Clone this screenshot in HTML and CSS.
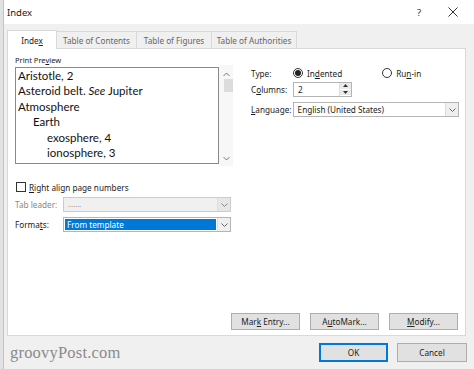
FILE: index.html
```html
<!DOCTYPE html>
<html>
<head>
<meta charset="utf-8">
<link rel="stylesheet" href="styles.css">
</head>
<body>
<div class="dialog">
  <div class="titlebar">
    <span class="title">Index</span>
    <span class="help">?</span>
    <svg class="close" width="10" height="10" viewBox="0 0 10 10"><path d="M0.5 0.5 L9.5 9.5 M9.5 0.5 L0.5 9.5" stroke="#333" stroke-width="1" fill="none"/></svg>
  </div>
  <div class="body">
    <div class="tabs">
      <div class="tab active"><span>Inde<u>x</u></span></div>
      <div class="tab"><span>Table of Contents</span></div>
      <div class="tab"><span>Table of Figures</span></div>
      <div class="tab"><span>Table of Authorities</span></div>
    </div>
    <div class="panel">
      <div class="top">
        <div class="left">
          <div class="pp-label">Print Pre<u>v</u>iew</div>
          <div class="preview-wrap">
            <div class="preview">
              <div class="ln">Aristotle, 2</div>
              <div class="ln">Asteroid belt. <i>See</i> Jupiter</div>
              <div class="ln">Atmosphere</div>
              <div class="ln l1">Earth</div>
              <div class="ln l2">exosphere, 4</div>
              <div class="ln l2">ionosphere, 3</div>
            </div>
            <div class="vscroll">
              <svg width="7" height="5" viewBox="0 0 7 5"><path d="M0.5 4 L3.5 1 L6.5 4" stroke="#777" fill="none"/></svg>
              <div class="thumb"></div>
              <div class="track"></div>
              <svg width="7" height="5" viewBox="0 0 7 5"><path d="M0.5 1 L3.5 4 L6.5 1" stroke="#777" fill="none"/></svg>
            </div>
          </div>
        </div>
        <div class="right">
          <div class="row type-row">
            <span class="lbl">Type:</span>
            <span class="radio checked"></span><span class="rtext">In<u>d</u>ented</span>
            <span class="radio runin"></span><span class="rtext">Ru<u>n</u>-in</span>
          </div>
          <div class="row cols-row">
            <span class="lbl">C<u>o</u>lumns:</span>
            <div class="spin">
              <span class="spin-val">2</span>
              <div class="spin-btns">
                <div class="sb"><svg width="5" height="3" viewBox="0 0 5 3"><path d="M0 3 L2.5 0 L5 3Z" fill="#333"/></svg></div>
                <div class="sb"><svg width="5" height="3" viewBox="0 0 5 3"><path d="M0 0 L2.5 3 L5 0Z" fill="#333"/></svg></div>
              </div>
            </div>
          </div>
          <div class="row lang-row">
            <span class="lbl"><u>L</u>anguage:</span>
            <div class="combo lang">
              <span class="cval">English (United States)</span>
              <span class="carrow"><svg width="7" height="4" viewBox="0 0 7 4"><path d="M0.5 0.5 L3.5 3.5 L6.5 0.5" stroke="#666" fill="none"/></svg></span>
            </div>
          </div>
        </div>
      </div>
      <div class="options">
        <div class="chk-row"><span class="checkbox"></span><span><u>R</u>ight align page numbers</span></div>
        <div class="row opt-row">
          <span class="lbl2 disabled">Tab leader:</span>
          <div class="combo small dis">
            <span class="cval dots">.......</span>
            <span class="carrow"><svg width="7" height="4" viewBox="0 0 7 4"><path d="M0.5 0.5 L3.5 3.5 L6.5 0.5" stroke="#888" fill="none"/></svg></span>
          </div>
        </div>
        <div class="row opt-row">
          <span class="lbl2">Forma<u>t</u>s:</span>
          <div class="combo small">
            <span class="cval sel">From template</span>
            <span class="carrow"><svg width="7" height="4" viewBox="0 0 7 4"><path d="M0.5 0.5 L3.5 3.5 L6.5 0.5" stroke="#666" fill="none"/></svg></span>
          </div>
        </div>
      </div>
      <div class="buttons">
        <div class="btn"><span>Mar<u>k</u> Entry...</span></div>
        <div class="btn"><span>A<u>u</u>toMark...</span></div>
        <div class="btn"><span><u>M</u>odify...</span></div>
      </div>
    </div>
    <div class="footer">
      <span class="watermark">groovyPost.com</span>
      <div class="btn ok"><span>OK</span></div>
      <div class="btn cancel"><span>Cancel</span></div>
    </div>
  </div>
</div>
</body>
</html>
```

FILE: styles.css
```css
* { box-sizing: border-box; }
html, body { margin: 0; padding: 0; }
body {
  background: #e2e2e2;
  font-family: "Noto Sans", "Open Sans", sans-serif;
  font-size: 8.2px;
  color: #1a1a1a;
  width: 474px;
  height: 369px;
  overflow: hidden;
}
u { text-decoration: underline; text-underline-offset: 1px; }
.dialog {
  margin-left: 3px;
  border-left: 1px solid #c4c4c4;
  height: 369px;
  background: #f0f0f0;
  display: flex;
  flex-direction: column;
}
.titlebar {
  height: 24px;
  background: #fff;
  display: flex;
  align-items: center;
  padding-left: 3px;
}
.title { font-size: 9.5px; flex: 1; }
.help { font-size: 9.5px; margin-right: 27px; color: #333; }
.close { margin-right: 16px; }
.body { flex: 1; padding: 5px 0 0 3px; display: flex; flex-direction: column; }
.tabs { display: flex; align-items: flex-end; height: 19px; }
.tab {
  height: 17px;
  border: 1px solid #d9d9d9;
  border-bottom: none;
  border-left: none;
  background: #f0f0f0;
  color: #666;
  display: flex;
  align-items: center;
  justify-content: center;
  white-space: nowrap;
  padding: 0;
}
.tab.active {
  height: 19px;
  background: #fff;
  color: #222;
  border-left: 1px solid #d9d9d9;
  width: 50px;
  margin-bottom: -1px;
  position: relative;
  z-index: 1;
}
.tab:nth-child(2) { width: 80px; }
.tab:nth-child(3) { width: 75px; }
.tab:nth-child(4) { width: 85px; }
.panel {
  width: 459px;
  height: 288px;
  background: #fff;
  border: 1px solid #d9d9d9;
  padding: 6px 7px 0 7px;
  display: flex;
  flex-direction: column;
}
.top { display: flex; }
.left { width: 218px; }
.pp-label { font-size: 7.5px; height: 12px; line-height: 10px; }
.preview-wrap { display: flex; }
.preview {
  width: 204px;
  height: 97px;
  border: 1px solid #8a8a8a;
  padding: 0 0 0 2px;
  font-family: "Lato", "Noto Sans", sans-serif;
  font-size: 11.5px;
  color: #111;
}
.ln { height: 15.4px; line-height: 16px; }
.l1 { padding-left: 15px; }
.l2 { padding-left: 29px; }
.vscroll {
  width: 14px;
  height: 101px;
  margin-top: -2px;
  background: #f7f7f7;
  display: flex;
  flex-direction: column;
  align-items: center;
  padding-top: 7px;
}
.thumb { width: 9px; height: 13px; background: #dcdcdc; margin-top: 2px; margin-left: 4px; }
.track { flex: 1; }
.vscroll svg:last-child { margin-bottom: 5px; }
.right { margin-left: 18px; width: 208px; padding-top: 10px; }
.row { display: flex; align-items: center; }
.lbl { width: 42px; }
.type-row { height: 16px; }
.radio {
  width: 10px; height: 10px; border-radius: 50%;
  border: 1px solid #333; background: #fff;
  display: inline-flex; align-items: center; justify-content: center;
  margin-right: 4px;
}
.radio.checked::after { content: ""; width: 6px; height: 6px; border-radius: 50%; background: #222; }
.radio.runin { margin-left: 40px; }
.cols-row { height: 15px; margin-top: 1px; }
.spin {
  width: 59px; height: 15px; border: 1px solid #b5b5b5;
  display: flex; background: #fff;
}
.spin-val { flex: 1; padding-left: 4px; line-height: 13px; }
.spin-btns { width: 12px; display: flex; flex-direction: column; border-left: 1px solid #ddd; }
.sb { flex: 1; background: #eaeaea; display: flex; align-items: center; justify-content: center; border-bottom: 1px solid #fff; }
.lang-row { height: 15px; margin-top: 5px; }
.combo {
  height: 15px; border: 1px solid #b5b5b5; background: #fff; display: flex;
}
.combo.lang { width: 168px; }
.cval { flex: 1; padding-left: 4px; line-height: 13px; }
.carrow {
  width: 13px; border-left: 1px solid #ddd; background: #efefef;
  display: flex; align-items: center; justify-content: center;
}
.options { margin-top: 15px; }
.chk-row { display: flex; align-items: center; height: 12px; margin-left: 1px; }
.checkbox { width: 10px; height: 10px; border: 1px solid #333; background: #fff; margin-right: 3px; }
.opt-row { height: 15px; }
.chk-row + .opt-row { margin-top: 4px; }
.opt-row + .opt-row { margin-top: 5px; }
.lbl2 { width: 48px; }
.disabled { color: #888; }
.combo.small { width: 168px; }
.combo.dis { background: #f0f0f0; border-color: #ccc; }
.combo.dis .carrow { background: #e6e6e6; }
.dots { color: #999; letter-spacing: 0; font-size: 7px; }
.cval.sel { background: #0078d7; color: #fff; margin: 1px; padding-left: 2px; line-height: 11px; }
.buttons { margin-top: auto; margin-bottom: 5px; display: flex; justify-content: flex-end; gap: 10px; }
.btn {
  width: 69px; height: 17px; background: #e1e1e1; border: 1px solid #adadad;
  display: flex; align-items: center; justify-content: center; color: #222;
  white-space: nowrap;
}
.footer { display: flex; align-items: center; height: 31px; padding-top: 2px; }
.watermark {
  font-family: "Liberation Serif", "DejaVu Serif", serif;
  font-size: 16.5px; color: #8a8a8a; margin-left: 3px; flex: 1;
  letter-spacing: 0.2px;
}
.btn.ok { width: 69px; height: 19px; border: 2px solid #0078d7; margin-right: 9px; }
.btn.cancel { width: 70px; height: 19px; margin-right: 7px; }
```
